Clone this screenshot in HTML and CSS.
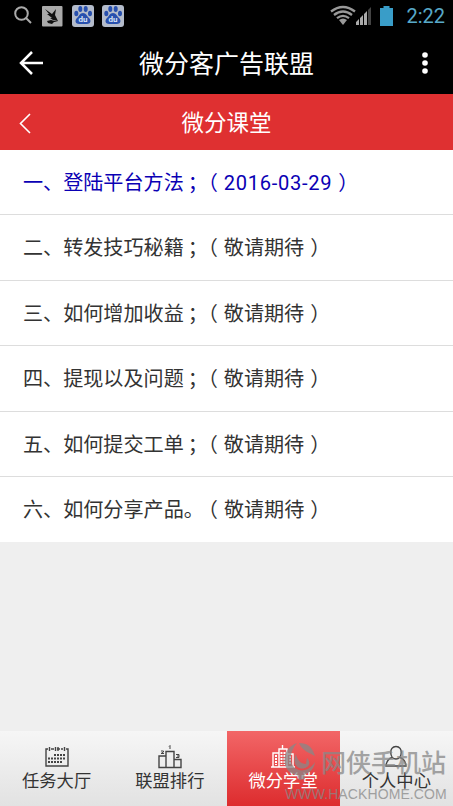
FILE: index.html
```html
<!DOCTYPE html>
<html lang="zh-CN">
  <head>
    <meta charset="UTF-8" />
    <meta name="viewport" content="width=device-width, initial-scale=1.0" />
    <title>微分课堂</title>
    <link rel="stylesheet" href="styles.css">
  </head>
  <body>
    <div class="status-bar">
      <svg class="search" width="20" height="20" viewBox="0 0 20 20"><circle cx="7.500" cy="7.500" r="6.300"/><path d="M12 12l5 5"/></svg>
      <svg width="21" height="21" viewBox="0 0 21 21">
        <rect width="20.5" height="20.5" rx="1" fill="#aaa"/>
        <path d="M3 3l7 5 4-5-1 6 3 6-5-1-3-2 2 0-5-4 2 0zM5 15l4-1 7 2-4 0-2 2-4-1z" fill="#111"/>
      </svg>
      <svg width="22" height="22" viewBox="0 0 22 22"><use href="#paw"/></svg>
      <svg width="22" height="22" viewBox="0 0 22 22">
        <g id="paw">
          <rect width="22" height="22" rx="3" fill="#b4bccb"/>
          <g fill="#2850ae">
            <ellipse cx="4.3" cy="8.5" rx="2" ry="2.8"/><ellipse cx="8.3" cy="4" rx="2" ry="3"/>
            <ellipse cx="13.7" cy="4" rx="2" ry="3"/><ellipse cx="18" cy="8.5" rx="2" ry="2.8"/>
            <path d="M11 8c3 0 4 3 6 5 3 3 1 6-2 6-2 0-6 0-8 0-3 0-5-3-2-6 2-2 3-5 6-5z"/>
          </g>
          <text x="11" y="17" class="paw-text">du</text>
        </g>
      </svg>
      <svg class="signal" width="42" height="22" viewBox="0 0 42 22">
        <g fill="none" stroke="#999" stroke-width="2.3">
          <path d="M1 6.5Q13-2.5 25 6.5M4 10Q13 3 22 10M7 13.2Q13 8.5 19 13.2"/>
        </g>
        <path d="M9 15q4-3 8 0l-4 5z" fill="#999"/>
        <path d="M26 20v-3l3-3v6zM30 20v-7l3-3v10zM34 20V9l3-3v14z" fill="#aaa"/>
        <path d="M38 20V5l3-3v18z" fill="#444"/>
      </svg>
      <svg class="battery" width="13" height="20" viewBox="0 0 13 20"><path d="M0 2h3.5V0h6v2H13v18H0z"/></svg>
      <span class="clock">2:22</span>
    </div>

    <header class="app-bar">
      <svg class="back" width="26" height="24" viewBox="0 0 26 24"><path d="M13 1L2 12l11 11M2 12h22"/></svg>
      <h1>微分客广告联盟</h1>
      <svg class="more" width="6" height="22" viewBox="0 0 6 22"><circle cx="3" cy="3" r="2.8"/><circle cx="3" cy="11" r="2.8"/><circle cx="3" cy="19" r="2.8"/></svg>
    </header>

    <div class="page-bar">
      <svg class="prev" width="12" height="21" viewBox="0 0 12 21"><path d="M11 1L1.5 10.5 11 20"/></svg>
      <h2>微分课堂</h2>
    </div>

    <ul class="lessons">
      <li class="active">一、登陆平台方法<i>；</i><b class="open">（</b><span>2016-03-29</span><b class="close">）</b></li>
      <li>二、转发技巧秘籍<i>；</i><b class="open">（</b>敬请期待<b class="close">）</b></li>
      <li>三、如何增加收益<i>；</i><b class="open">（</b>敬请期待<b class="close">）</b></li>
      <li>四、提现以及问题<i>；</i><b class="open">（</b>敬请期待<b class="close">）</b></li>
      <li>五、如何提交工单<i>；</i><b class="open">（</b>敬请期待<b class="close">）</b></li>
      <li>六、如何分享产品。<b class="open">（</b>敬请期待<b class="close">）</b></li>
    </ul>

    <nav class="tabs">
      <a>
        <svg width="24" height="24" viewBox="0 0 24 24">
          <path d="M3 4H1v17h22V4h-2M6 4h3M12 4h3M4.500 2v4M10.500 2v4M13 2v4M19.500 2v4M16 4h2"/>
          <path d="M9 10h12M3 13.500h18M3 17h15" stroke-width="2" stroke-dasharray="2 1"/>
        </svg>
        任务大厅
      </a>
      <a>
        <svg width="24" height="24" viewBox="0 0 24 24">
          <path d="M1 22.500V11h7v11.500zM8 22.500V6.500h8v16zM16 22.500V14.500h7v8z"/>
          <path d="M11 1.500l1-1V4M3 6h2.500v1L3 8.500h3M18 9.500h3v3h-3M19 11h2" stroke-width="1"/>
        </svg>
        联盟排行
      </a>
      <a class="current">
        <svg width="24" height="24" viewBox="0 0 24 24">
          <path d="M2 22V8h6v14M8 22V4h8v18M16 9h6v13M0 22h24M11.500 4V0"/>
          <path d="M5 10v10M10.500 7v13M13.500 7v13M19 11v9" stroke-width="2" stroke-dasharray="2 1"/>
        </svg>
        微分学堂
      </a>
      <a>
        <svg width="24" height="24" viewBox="0 0 24 24">
          <path d="M12 1.500C4.500 1.500 5.500 14 12 14S19.500 1.500 12 1.500zM8 12.500c-3 1-5.500 3-6 8.500h20c-.5-5.500-3-7.500-6-8.500"/>
        </svg>
        个人中心
      </a>
      <div class="watermark">
        <svg width="36" height="40" viewBox="0 0 36 40">
          <path d="M14 1C-1 6-2 25 8 31c10 6 23 0 24-11-5 8-14 11-20 6-7-6-5-17 2-25z"/>
          <path d="M13 12c-5 10 3 18 11 13 3-2 3-6 0-9l-1 6c-5 0-9-4-10-10zM16 1c8 0 13 3 16 13-5-3-13-5-16-13z"/>
          <path d="M14 31l7 0 1 6-6 1z"/>
        </svg>
        <div class="site">网侠手机站</div>
        <div class="url">WWW.HACKHOME.COM</div>
      </div>
    </nav>
  </body>
</html>
```

FILE: styles.css
```css
* {
  box-sizing: border-box;
}

body {
  margin: 0;
  height: 806px;
  display: flex;
  flex-direction: column;
  background: #efefef;
  color: #333;
  font-family: Roboto, "Noto Sans CJK SC", sans-serif;
  overflow: hidden;
}

h1, h2 {
  margin: 0;
  font-weight: 400;
  color: #fff;
}

.status-bar {
  height: 32px;
  display: flex;
  align-items: center;
  gap: 8.4px;
  padding: 0 8px 0 14px;
  background: #000;
}
.search {
  fill: none;
  stroke: #aaa;
  stroke-width: 2;
}
.paw-text {
  fill: #dce5f7;
  font-size: 8px;
  font-weight: bold;
  text-anchor: middle;
}
.signal {
  margin-left: auto;
}
.battery {
  fill: #399dc8;
  margin-right: 5px;
}
.clock {
  font-size: 20px;
  line-height: 32px;
  color: #58a9c9;
}

.app-bar {
  height: 62px;
  display: grid;
  grid-template-columns: 60px 1fr 60px;
  align-items: center;
  background: #000;
}
.app-bar h1 {
  padding-top: 3px;
  font-size: 25px;
  line-height: 59px;
  text-align: center;
}
.back {
  margin-left: 19px;
  fill: none;
  stroke: #fff;
  stroke-width: 2.5;
}
.more {
  margin-left: 29px;
  fill: #fff;
}

.page-bar {
  height: 56px;
  display: grid;
  grid-template-columns: 60px 1fr 60px;
  align-items: center;
  background: #df3031;
}
.page-bar h2 {
  padding-top: 1px;
  font-size: 22.5px;
  line-height: 54px;
  text-align: center;
}
.prev {
  margin: 3px 0 0 19px;
  fill: none;
  stroke: #fff;
  stroke-width: 1.6;
}

.lessons {
  flex: none;
  margin: 0;
  padding: 0;
  list-style: none;
  background: #fff;
}
.lessons li {
  height: 65.4px;
  padding: 1px 0 0 23px;
  border-bottom: 1px solid #ddd;
  font-size: 20.1px;
  line-height: 65px;
  white-space: nowrap;
}
.lessons li:last-child {
  border-bottom: 0;
}
.lessons .active {
  color: #0a00b4;
}
.lessons span {
  letter-spacing: .7px;
}
/* half-width punctuation, spaced out by hand */
.lessons i,
.lessons b {
  display: inline-block;
  font-style: normal;
  font-weight: 400;
  font-feature-settings: "halt";
}
.lessons i {
  margin: 0 6px 0 4px;
}
.lessons .open {
  margin: 0 6px 0 4px;
}
.lessons .close {
  margin-left: 6px;
}

.tabs {
  position: relative;
  height: 75px;
  margin-top: auto;
  display: grid;
  grid-template-columns: repeat(4, 1fr);
  background: linear-gradient(#f6f6f6, #e2e2e2);
}
.tabs a {
  display: flex;
  flex-direction: column;
  align-items: center;
  padding-top: 14px;
  font-size: 17.3px;
  line-height: 25px;
}
.tabs a svg {
  fill: none;
  stroke: #444;
  stroke-width: 1.4;
}
.tabs .current {
  color: #fff;
  background: linear-gradient(#f26667, #dd2c2e);
}
.tabs .current svg {
  stroke: #fff;
}

/* site mark over the last two tabs */
.watermark {
  position: absolute;
  left: 282px;
  top: 10px;
  width: 171px;
  height: 65px;
  color: #888;
  opacity: .75;
}
.watermark svg {
  position: absolute;
  left: 1px;
  top: 1px;
  fill: #888;
}
.site {
  position: absolute;
  left: 39px;
  top: 5px;
  font-size: 25px;
  line-height: 36px;
  font-weight: 500;
  white-space: nowrap;
}
.url {
  position: absolute;
  left: 3px;
  top: 44px;
  font: 14px/18px "Liberation Sans", sans-serif;
  letter-spacing: .1px;
}
```
